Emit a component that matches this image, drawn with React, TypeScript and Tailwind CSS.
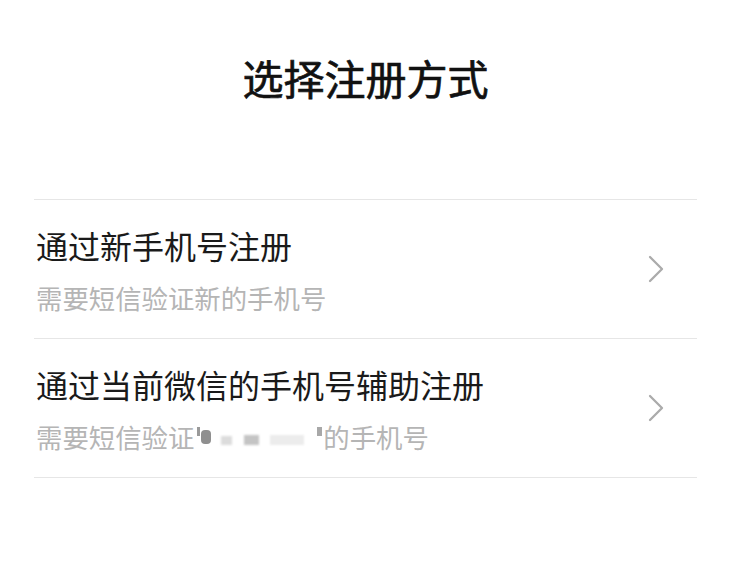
import React from 'react';

const font = { fontFamily: '"Noto Sans CJK SC", "Noto Sans", sans-serif' };

const Chevron: React.FC = () => (
  <svg width="16" height="28" viewBox="0 0 16 28" fill="none" className="shrink-0">
    <polyline points="2,2 14,14 2,26" stroke="#ababab" strokeWidth="2.3" strokeLinecap="round" strokeLinejoin="round" />
  </svg>
);

interface RowProps {
  title: string;
  sub: React.ReactNode;
  last?: boolean;
}

const Row: React.FC<RowProps> = ({ title, sub, last = false }) => (
  <div className={`flex items-center border-t border-[#e6e6e6] pl-[2px] pr-[33px] ${last ? 'border-b' : ''}`}>
    <div className="flex-1 pt-[25px] pb-[23px]">
      <div className="text-[32px] leading-[40px] text-[#1a1a1a]">{title}</div>
      <div className="mt-[16px] text-[26.4px] leading-[34px] text-[#b5b5b5] flex items-center">{sub}</div>
    </div>
    <Chevron />
  </div>
);

const Masked: React.FC = () => (
  <span className="inline-flex items-center h-[34px] ml-[3px] mr-[1px]">
    <span className="inline-block w-[3px] h-[9px] bg-[#9a9a9a] mt-[-12px]" />
    <span className="inline-block w-[10px] h-[14px] rounded-sm bg-[#8f8f8f] ml-[1px] blur-[0.6px]" />
    <span className="inline-block w-[11px] h-[9px] bg-[#dcdcdc] ml-[10px] mt-[6px] blur-[0.8px]" />
    <span className="inline-block w-[15px] h-[10px] bg-[#c4c4c4] ml-[12px] mt-[6px] blur-[0.8px]" />
    <span className="inline-block w-[34px] h-[10px] bg-[#ececec] ml-[11px] mt-[6px] blur-[1px]" />
    <span className="inline-block w-[5px] h-[9px] bg-[#a8a8a8] ml-[13px] mt-[-12px]" />
  </span>
);

export default function App() {
  return (
    <div className="w-[731px] h-[568px] bg-white" style={font}>
      <div className="h-[155px] flex items-center justify-center">
        <h1 className="text-[41px] leading-none font-normal text-[#111] [-webkit-text-stroke:0.7px_#111]">选择注册方式</h1>
      </div>
      <div className="mt-[44px] mx-[34px]">
        <Row title="通过新手机号注册" sub="需要短信验证新的手机号" />
        <Row
          title="通过当前微信的手机号辅助注册"
          sub={
            <>
              需要短信验证
              <Masked />
              的手机号
            </>
          }
          last
        />
      </div>
    </div>
  );
}
